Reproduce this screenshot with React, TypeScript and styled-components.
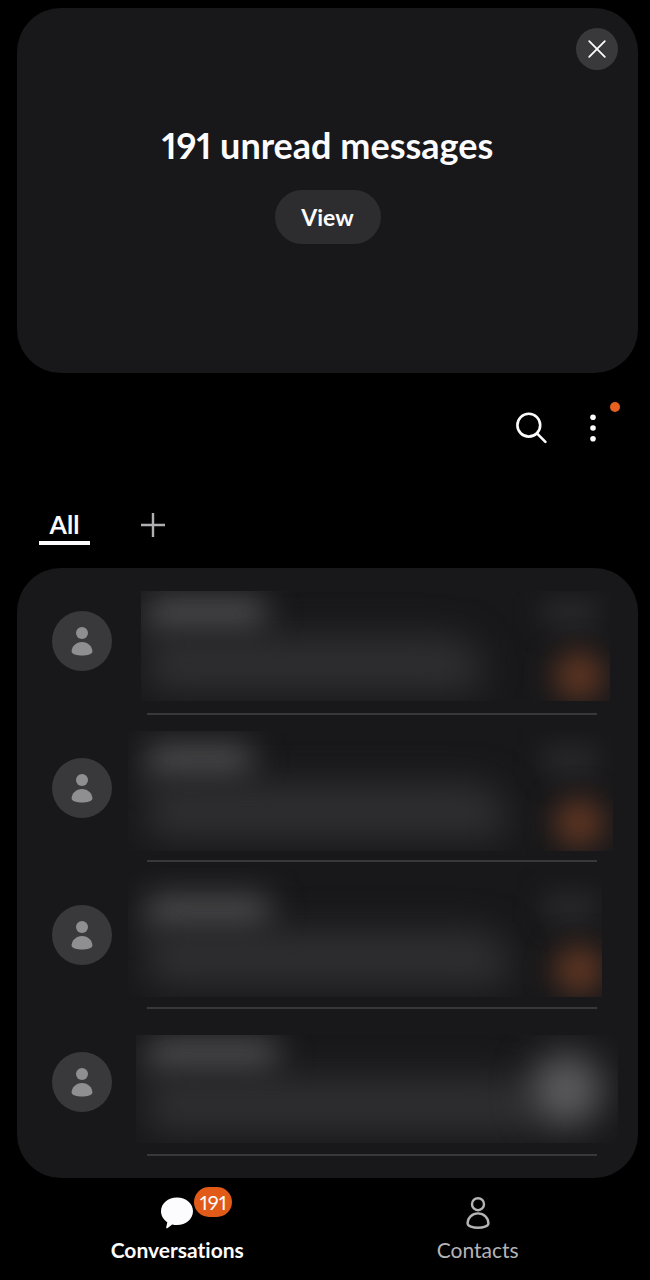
import React from "react";
import styled, { createGlobalStyle } from "styled-components";

const GlobalStyle = createGlobalStyle`
  * { box-sizing: border-box; }
  body {
    margin: 0;
    background: #000;
    color: #fcfcfe;
    font-family: Lato, Roboto, "Liberation Sans", sans-serif;
    font-variant-ligatures: none;
    font-variant-numeric: proportional-nums;
  }
  button, a { font-family: inherit; color: inherit; }
  button { border: 0; padding: 0; background: none; cursor: pointer; }
`;

const Screen = styled.div`
  display: flex;
  flex-direction: column;
  min-height: 100vh;
  padding-top: 8px;
`;

const Card = styled.section`
  margin: 0 12px 0 17px;
  border-radius: 44px;
  background: #18181a;
`;

const Summary = styled(Card)`
  display: flex;
  flex-direction: column;
  align-items: center;
  padding: 20px 20px 129px;
`;

const CloseButton = styled.button`
  display: grid;
  place-items: center;
  align-self: flex-end;
  width: 42px;
  height: 42px;
  border-radius: 50%;
  background: #39393b;
`;

const Title = styled.h1`
  margin: 55px 0 25px;
  font-size: 36px;
  line-height: 40px;
  font-weight: 700;
`;

const ViewButton = styled.button`
  width: 106px;
  height: 54px;
  border-radius: 27px;
  background: #2d2d2f;
  font-size: 23px;
  line-height: 28px;
  font-weight: 700;
`;

const Toolbar = styled.div`
  display: flex;
  justify-content: flex-end;
  gap: 20px;
  margin-top: 25px;
  padding-right: 36px;
`;

const IconButton = styled.button`
  position: relative;
  display: grid;
  place-items: center;
  width: 42px;
  height: 60px;
`;

const NewDot = styled.span`
  position: absolute;
  top: 4px;
  right: -6px;
  width: 10px;
  height: 10px;
  border-radius: 50%;
  background: #e6601f;
`;

const Filters = styled.div`
  display: flex;
  align-items: flex-end;
  gap: 44px;
  margin: 45px 0 23px;
  padding-left: 39px;
`;

const FilterTab = styled.button`
  width: 51px;
  padding-top: 4px;
  border-bottom: 4px solid #fcfcfe;
  font-size: 25px;
  line-height: 34px;
  font-weight: 700;
`;

const AddButton = styled.button`
  display: grid;
  place-items: center;
  width: 38px;
  height: 40px;
`;

const List = styled.ul`
  margin: 0;
  padding: 0 0 22px;
  list-style: none;
`;

const Row = styled.li`
  display: flex;
  align-items: flex-start;
  gap: 35px;
  height: 147px;
  padding: 0 41px 0 35px;
`;

const Avatar = styled.span`
  display: grid;
  place-items: center;
  flex: none;
  width: 60px;
  height: 60px;
  margin-top: 43px;
  border-radius: 50%;
  background: #39393b;
`;

const RowBody = styled.div`
  flex: 1;
  height: 100%;
  border-bottom: 2px solid #38383a;
`;

const Preview = styled.div<{ $clip: string }>`
  display: flex;
  justify-content: space-between;
  height: 145px;
  margin: 0 -21px 0 -19px;
  padding: 30px 21px 0 19px;
  clip-path: inset(${(p) => p.$clip});
`;

const Lines = styled.div`
  flex: 1;
`;

const Side = styled.div`
  display: flex;
  flex-direction: column;
  align-items: flex-end;
  justify-content: space-between;
  width: 60px;
  height: 102px;
`;

const HiddenName = styled.div<{ $width: number; $drop: number }>`
  width: ${(p) => p.$width}px;
  height: 32px;
  margin-top: ${(p) => p.$drop}px;
  margin-bottom: ${(p) => 6 - p.$drop}px;
  background: #505052;
  filter: blur(16px);
`;

const HiddenText = styled.div<{ $width: string }>`
  width: ${(p) => p.$width};
  height: 56px;
  border-radius: 12px 36px 12px 12px;
  background: #2f2f31;
  filter: blur(18px);
`;

const HiddenTime = styled.div`
  width: 54px;
  height: 30px;
  background: #28282a;
  filter: blur(13px);
`;

const HiddenBadge = styled.div`
  width: 48px;
  height: 48px;
  margin-right: -6px;
  border-radius: 50%;
  background: #653823;
  filter: blur(15px);
`;

const HiddenImage = styled.div`
  width: 74px;
  height: 74px;
  margin: auto -6px auto 0;
  border-radius: 50%;
  background: #5b5b5d;
  filter: blur(18px);
`;

const Nav = styled.nav`
  display: flex;
  margin: 0 22px 0 27px;
`;

const NavLink = styled.a<{ $active?: boolean }>`
  flex: 1;
  display: flex;
  flex-direction: column;
  align-items: center;
  gap: 8px;
  padding: 18px 0 16px;
  color: ${(p) => (p.$active ? "#fcfcfe" : "#b4b4b6")};
  font-size: 21px;
  line-height: 24px;
  font-weight: ${(p) => (p.$active ? 700 : 400)};
  text-decoration: none;
`;

const NavIcon = styled.span`
  position: relative;
  display: grid;
  height: 34px;
`;

const Count = styled.span`
  position: absolute;
  left: 33px;
  top: -9px;
  width: 38px;
  height: 30px;
  border-radius: 15px;
  background: #e25a17;
  color: #fcfcfe;
  font-size: 20px;
  line-height: 30px;
  font-weight: 400;
  text-align: center;
`;

type Message = {
  clip: string;
  name: number;
  drop: number;
  text: string;
  image?: boolean;
};

const messages: Message[] = [
  { clip: "23px 8px 12px 13px", name: 118, drop: 0, text: "86%" },
  { clip: "16px 5px 9px 0", name: 104, drop: 0, text: "92%" },
  { clip: "6px 16px 10px 0", name: 122, drop: 4, text: "93%" },
  { clip: "26px 0 11px 8px", name: 130, drop: 0, text: "100%", image: true },
];

const PersonIcon = () => (
  <svg width="22" height="30" viewBox="0 0 22 30" fill="#8f8f91" aria-hidden="true">
    <circle cx="11" cy="7" r="6" />
    <path d="M11 16C17 16 21.4 20.5 21.4 25.6C21.4 28.4 16 29.6 11 29.6S.6 28.4.6 25.6C.6 20.5 5 16 11 16Z" />
  </svg>
);

export default function App() {
  return (
    <Screen>
      <GlobalStyle />
      <Summary>
        <CloseButton aria-label="Close">
          <svg width="20" height="20" viewBox="0 0 20 20" stroke="#fcfcfe" strokeWidth="1.8" strokeLinecap="round">
            <path d="M2.2 2.2 17.8 17.8M17.8 2.2 2.2 17.8" />
          </svg>
        </CloseButton>
        <Title>191 unread messages</Title>
        <ViewButton>View</ViewButton>
      </Summary>

      <Toolbar>
        <IconButton aria-label="Search">
          <svg width="32" height="32" viewBox="0 0 32 32" fill="none" stroke="#fcfcfe" strokeWidth="2.6" strokeLinecap="round">
            <circle cx="13.8" cy="13.2" r="11.4" />
            <path d="M22.2 21.6 30.4 29.8" />
          </svg>
        </IconButton>
        <IconButton aria-label="More options">
          <svg width="8" height="30" viewBox="0 0 8 30" fill="#fcfcfe">
            <circle cx="4" cy="4.2" r="2.8" />
            <circle cx="4" cy="15" r="2.8" />
            <circle cx="4" cy="25.8" r="2.8" />
          </svg>
          <NewDot />
        </IconButton>
      </Toolbar>

      <Filters>
        <FilterTab>All</FilterTab>
        <AddButton aria-label="Add category">
          <svg width="24" height="24" viewBox="0 0 24 24" stroke="#b0b0b2" strokeWidth="2.4">
            <path d="M12 0V24M0 12H24" />
          </svg>
        </AddButton>
      </Filters>

      <Card>
        <List>
          {messages.map((m, i) => (
            <Row key={i}>
              <Avatar>
                <PersonIcon />
              </Avatar>
              <RowBody>
                <Preview $clip={m.clip}>
                  <Lines>
                    <HiddenName $width={m.name} $drop={m.drop} />
                    <HiddenText $width={m.text} />
                  </Lines>
                  <Side>
                    {m.image ? (
                      <HiddenImage />
                    ) : (
                      <>
                        <HiddenTime />
                        <HiddenBadge />
                      </>
                    )}
                  </Side>
                </Preview>
              </RowBody>
            </Row>
          ))}
        </List>
      </Card>

      <Nav>
        <NavLink href="#conversations" $active>
          <NavIcon>
            <svg width="32" height="34" viewBox="0 0 32 34" fill="#fcfcfe" aria-hidden="true">
              <path d="M16 1.5C25 1.5 32 7.6 32 15.2S25 29 16 29C14.3 29 12.7 28.8 11.2 28.4L6.3 32.2C5.7 32.6 5 32.1 5.2 31.4L6.3 26.2C2.5 23.7 0 19.7 0 15.2C0 7.6 7 1.5 16 1.5Z" />
            </svg>
            <Count>191</Count>
          </NavIcon>
          Conversations
        </NavLink>
        <NavLink href="#contacts">
          <NavIcon>
            <svg width="24" height="34" viewBox="0 0 24 34" fill="none" stroke="#b4b4b6" strokeWidth="2.4" aria-hidden="true">
              <circle cx="12" cy="8.2" r="6" />
              <path d="M12 17.4C18 17.4 22.4 22 22.4 27.4C22.4 30.2 17 31.8 12 31.8S1.6 30.2 1.6 27.4C1.6 22 6 17.4 12 17.4Z" />
            </svg>
          </NavIcon>
          Contacts
        </NavLink>
      </Nav>
    </Screen>
  );
}
